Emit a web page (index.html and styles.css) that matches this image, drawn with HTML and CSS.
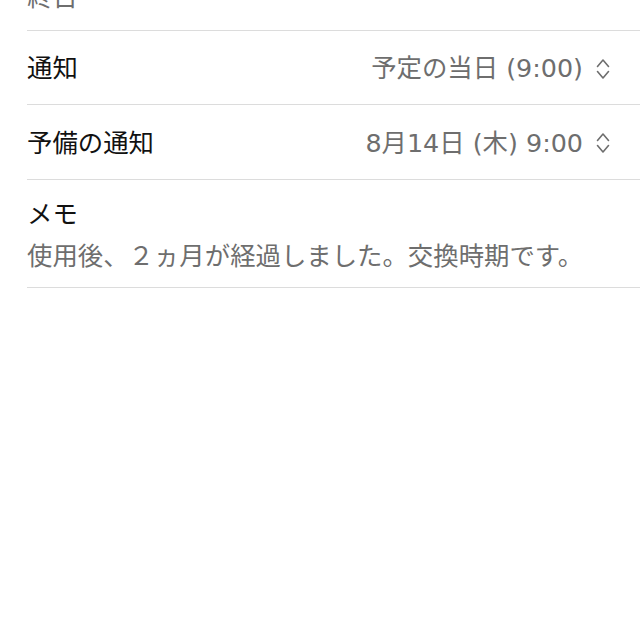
FILE: index.html
```html
<!DOCTYPE html>
<html lang="ja">
<head>
<meta charset="utf-8">
<link rel="stylesheet" href="styles.css">
</head>
<body>
<div class="list">
  <div class="row row-top"><span class="muted">終日</span></div>
  <div class="row row-a">
    <span class="label">通知</span>
    <span class="value">予定の当日 (9:00)
      <svg class="chev" width="14" height="22" viewBox="0 0 14 22"><polyline points="1.5,8.5 7,2 12.5,8.5"/><polyline points="1.5,13.5 7,20 12.5,13.5"/></svg>
    </span>
  </div>
  <div class="row row-b">
    <span class="label">予備の通知</span>
    <span class="value">8月14日 (木) 9:00
      <svg class="chev" width="14" height="22" viewBox="0 0 14 22"><polyline points="1.5,8.5 7,2 12.5,8.5"/><polyline points="1.5,13.5 7,20 12.5,13.5"/></svg>
    </span>
  </div>
  <div class="row row-memo">
    <span class="label">メモ</span>
    <span class="muted">使用後、２ヵ月が経過しました。交換時期です。</span>
  </div>
</div>
</body>
</html>
```
FILE: styles.css
```css
html, body {
  margin: 0;
  padding: 0;
  background: #fff;
}
body {
  font-family: "DejaVu Sans", "Noto Sans CJK JP", sans-serif;
  font-size: 25.4px;
  line-height: 25px;
  color: #111;
  overflow: hidden;
}
.list {
  padding-left: 27px;
}
.row {
  display: flex;
  align-items: center;
  justify-content: space-between;
  border-bottom: 1px solid #dcdcdc;
  padding-right: 30px;
}
.row-top {
  margin-top: -15px;
  padding-bottom: 20px;
}
.row-a {
  height: 71px;
  padding-top: 2px;
}
.row-b {
  height: 72px;
  padding-top: 2px;
}
.row-memo {
  flex-direction: column;
  align-items: flex-start;
  justify-content: flex-start;
  gap: 17px;
  padding-top: 22px;
  padding-bottom: 18px;
}
.muted {
  color: #6e6e6e;
}
.value {
  color: #6e6e6e;
  display: flex;
  align-items: center;
  gap: 13px;
}
.chev {
  fill: none;
  stroke: #6e6e6e;
  stroke-width: 1.6;
  stroke-linecap: round;
  stroke-linejoin: round;
}
```
